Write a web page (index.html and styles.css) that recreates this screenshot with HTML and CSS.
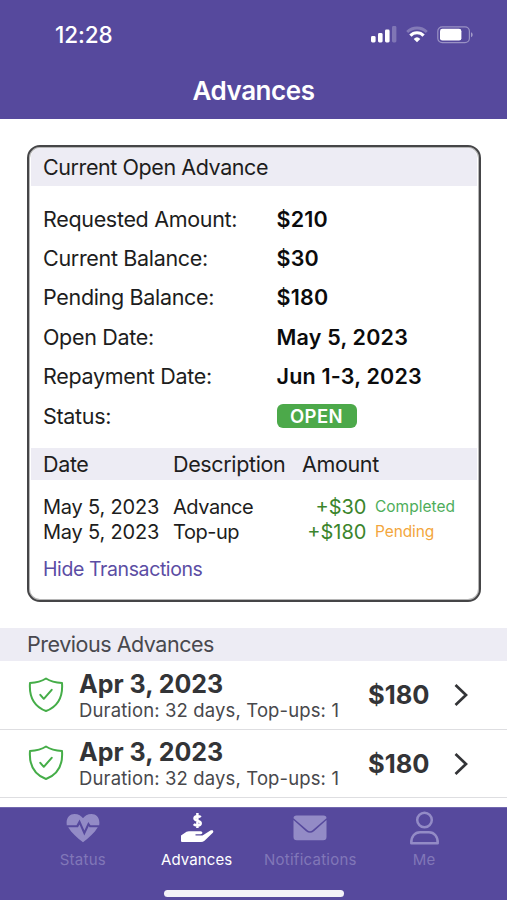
FILE: index.html
```html
<!DOCTYPE html>
<html lang="en">
<head>
<meta charset="utf-8">
<title>Advances</title>
<link rel="stylesheet" href="styles.css">
</head>
<body>
<div class="app">
  <header class="header">
    <div class="status-bar">
      <span class="clock">12:28</span>
      <svg class="signal" width="26" height="17" viewBox="0 0 26 17" fill="#fff">
        <rect x="0" y="10" width="4.6" height="6.5" rx="1.4"/>
        <rect x="7" y="7" width="4.6" height="9.5" rx="1.4"/>
        <rect x="14" y="3.5" width="4.6" height="13" rx="1.4"/>
        <rect x="21" y="0" width="4.4" height="16.5" rx="1.4" opacity=".25"/>
      </svg>
      <svg class="wifi" width="22" height="17" viewBox="0 0 22 17" fill="none" stroke="#fff">
        <path d="M1.2 6A14 14 0 0 1 20.8 6" stroke-width="2.8" opacity=".27"/>
        <path d="M4.400 9.600A9 9 0 0 1 17.600 9.600" stroke-width="3.100"/>
        <path d="M7.7 12.9A4.8 4.8 0 0 1 14.3 12.9L11 16.200Z" fill="#fff" stroke="none"/>
      </svg>
      <svg class="battery" width="37" height="18" viewBox="0 0 37 18">
        <rect x=".8" y=".8" width="31.6" height="15.8" rx="4.4" fill="none" stroke="#fff" stroke-width="1.2" opacity=".4"/>
        <rect x="3" y="2.8" width="21.4" height="11.8" rx="2.4" fill="#fff"/>
        <path d="M34 6.2c2.2.8 2.2 4.2 0 5z" fill="#fff" opacity=".45"/>
      </svg>
    </div>
    <h1 class="title">Advances</h1>
  </header>

  <main class="content">
    <section class="card">
      <h2 class="band card-title">Current Open Advance</h2>
      <dl class="details">
        <dt>Requested Amount:</dt><dd>$210</dd>
        <dt>Current Balance:</dt><dd>$30</dd>
        <dt>Pending Balance:</dt><dd>$180</dd>
        <dt>Open Date:</dt><dd>May 5, 2023</dd>
        <dt>Repayment Date:</dt><dd>Jun 1-3, 2023</dd>
        <dt>Status:</dt><dd><span class="badge">OPEN</span></dd>
      </dl>
      <div class="band table-head"><span>Date</span><span>Description</span><span>Amount</span></div>
      <div class="table-body">
        <div class="tx"><span>May 5, 2023</span><span class="kind">Advance</span><span class="amount">+$30</span><span class="state done">Completed</span></div>
        <div class="tx"><span>May 5, 2023</span><span class="kind">Top-up</span><span class="amount">+$180</span><span class="state pending">Pending</span></div>
      </div>
      <a class="toggle">Hide Transactions</a>
    </section>

    <h2 class="section-head">Previous Advances</h2>
    <ul class="history">
      <li class="item">
        <svg class="shield" width="36" height="36" viewBox="0 0 36 36" fill="none" stroke="#45ad48" stroke-width="2" stroke-linejoin="round" stroke-linecap="round"><path d="M18 1.5C22.5 4.5 28.5 5.7 34 5.9C35 19 30 29.5 18 34C6 29.5 1 19 2 5.9C7.500 5.700 13.500 4.500 18 1.500Z"/><path d="M12.300 17.800L15.800 21.800L23.700 12.800"/></svg>
        <div class="info"><strong>Apr 3, 2023</strong><span>Duration: 32 days, Top-ups: 1</span></div>
        <b class="price">$180</b>
        <svg class="chevron" width="14" height="24" viewBox="0 0 14 24" fill="none" stroke="#333437" stroke-width="2.700"><path d="M1.500 2L12 12L1.500 22"/></svg>
      </li>
      <li class="item">
        <svg class="shield" width="36" height="36" viewBox="0 0 36 36" fill="none" stroke="#45ad48" stroke-width="2" stroke-linejoin="round" stroke-linecap="round"><path d="M18 1.5C22.5 4.5 28.5 5.7 34 5.9C35 19 30 29.5 18 34C6 29.5 1 19 2 5.9C7.500 5.700 13.500 4.500 18 1.500Z"/><path d="M12.300 17.800L15.800 21.800L23.700 12.800"/></svg>
        <div class="info"><strong>Apr 3, 2023</strong><span>Duration: 32 days, Top-ups: 1</span></div>
        <b class="price">$180</b>
        <svg class="chevron" width="14" height="24" viewBox="0 0 14 24" fill="none" stroke="#333437" stroke-width="2.700"><path d="M1.500 2L12 12L1.500 22"/></svg>
      </li>
    </ul>
  </main>

  <nav class="tabs">
    <div class="tab-row">
      <a class="tab">
        <svg width="34" height="34" viewBox="0 0 34 34" fill="#938bc6"><path d="M.8 14.200C-.3 7 3.500 3 8.500 3C12.500 3 15.500 5 17 7.300C18.500 5 21.500 3 25.500 3C30.500 3 34.300 7 33.200 14.200H24.500L22.300 11L18.400 19.500L13.600 8.500L10.500 14.200Z"/><path d="M2.200 16.200H12L13.500 13.500L18.300 24.500L22.800 15L23.500 16.200H31.800C28.500 22 22.500 27 17 31.300C11.500 27 5.500 22 2.200 16.200Z"/></svg>
        <span>Status</span>
      </a>
      <a class="tab active">
        <svg width="34" height="34" viewBox="0 0 34 34" fill="#fff"><path d="M20.800 6.200C19.500 5 14.500 4.600 14.500 7.400C14.500 10.300 20.700 8.900 20.700 12.200C20.700 15.100 15.200 14.800 13.700 13.200M17.400 2V17" fill="none" stroke="#fff" stroke-width="2.500"/><path d="M1 24.500L6.500 20.800Q7.500 20.200 9 20.200H20.500C23 20.200 23 23.200 20.500 23.200H15.500V24.400H22.500L30 19.700C32.800 18.200 34.500 20.200 32.300 22.300L24.500 29.700Q22.800 31 21 31H2Q1 31 1 30Z"/></svg>
        <span>Advances</span>
      </a>
      <a class="tab">
        <svg width="34" height="34" viewBox="0 0 34 34" fill="#938bc6"><path d="M3.500 4.500H30.500Q33.500 4.500 33.500 7.300L19.500 19.200Q17 21.300 14.500 19.200L.5 7.300Q.5 4.500 3.500 4.500Z"/><path d="M.5 9L13 20.200Q17 23.200 21 20.200L33.500 9V26Q33.500 29.300 30.200 29.300H3.800Q.5 29.300 .5 26Z"/></svg>
        <span>Notifications</span>
      </a>
      <a class="tab">
        <svg width="34" height="34" viewBox="0 0 34 34" fill="none" stroke="#938bc6" stroke-width="2.500"><circle cx="17.500" cy="9" r="7.300"/><path d="M4.300 32.300C3.800 25.500 8 21.300 13 21.300H22C27 21.300 31.200 25.500 30.700 32.300Z" stroke-linejoin="round"/></svg>
        <span>Me</span>
      </a>
    </div>
    <div class="home-indicator"></div>
  </nav>
</div>
</body>
</html>
```

FILE: styles.css
```css
* { box-sizing: border-box; margin: 0; padding: 0; }
body { width: 507px; height: 900px; overflow: hidden; background: #fff; font-family: Inter, "Liberation Sans", sans-serif; font-size: 21.5px; color: #1d1d20; }
svg { display: block; flex: none; }
.app { display: flex; flex-direction: column; height: 900px; }

.header { height: 119px; background: #56499d; color: #fff; }
.status-bar { display: flex; align-items: flex-start; height: 70px; padding: 26px 33px 0 55px; }
.clock { flex: 1; margin-top: -4px; font-size: 22.5px; line-height: 26px; font-weight: 500; letter-spacing: -.1px; }
.signal { margin-top: 0; }
.wifi { margin-left: 9px; }
.battery { margin-left: 9px; }
.title { font-size: 26px; line-height: 41px; font-weight: 600; text-align: center; letter-spacing: -.45px; }

.content { flex: 1; }
.card { height: 457px; margin: 26px 26px 26px 27px; border: 2px solid #454547; border-radius: 13px; padding: 1px 2px; box-shadow: inset 0 0 0 1px rgba(69, 69, 71, .4); }
.band { background: #edecf4; font-size: 21.5px; font-weight: 400; color: #1d1d20; letter-spacing: -.35px; }
.card-title { height: 38px; padding-left: 12px; line-height: 38px; border-radius: 9px 9px 0 0; letter-spacing: -.42px; }
.details { display: grid; grid-template-columns: 233.5px 1fr; grid-auto-rows: 39.4px; align-items: center; padding: 13px 0 0 12px; height: 262px; }
.details dt { letter-spacing: -.32px; }
.details dd { font-weight: 600; color: #0b0b0c; letter-spacing: .2px; }
.badge { display: flex; align-items: center; justify-content: center; width: 80px; height: 24px; border-radius: 6px; background: #4ca94a; color: #fff; font-size: 18.5px; letter-spacing: .4px; }
.table-head, .tx { display: grid; grid-template-columns: 130px 129px 64.5px 1fr; align-items: center; padding-left: 12px; }
.table-head { height: 32px; }
.table-head span { line-height: 32px; }
.table-body { margin-top: 14px; }
.tx { height: 25px; font-size: 20px; letter-spacing: -.2px; }
.tx span { white-space: nowrap; }
.tx .kind { letter-spacing: -.45px; }
.tx .amount { justify-self: end; color: #3b852c; letter-spacing: 0; }
.tx .state { padding-left: 8.5px; font-size: 15.5px; letter-spacing: 0; }
.tx .done { color: #4ead5a; }
.tx .pending { color: #f3a63c; letter-spacing: -.1px; }
.toggle { display: block; margin: 12px 0 0 12px; line-height: 26px; font-size: 19.5px; letter-spacing: -.4px; color: #5b4da4; }

.section-head { height: 33px; padding-left: 27px; background: #edecf4; color: #48484e; font-size: 21.5px; line-height: 33px; font-weight: 400; letter-spacing: -.47px; }
.history { list-style: none; }
.item { display: flex; align-items: center; height: 68.500px; padding: 0 39px 0 28px; border-bottom: 1.500px solid #dedee1; }
.info { display: flex; flex-direction: column; width: 289px; margin-left: 15px; padding-top: 3px; color: #333437; white-space: nowrap; }
.info strong { font-size: 25px; line-height: 28px; font-weight: 700; }
.info span { font-size: 18.500px; line-height: 25px; color: #48484c; letter-spacing: .13px; }
.price { flex: 1; font-size: 25.5px; font-weight: 700; color: #333437; }
.chevron { margin-top: 1px; }

.tabs { height: 93px; background: #56499d; border-top: 1px solid #7168ae; }
.tab-row { display: grid; grid-template-columns: repeat(4, 1fr); height: 82px; padding: 3px 26px 0; }
.tab { display: flex; flex-direction: column; align-items: center; color: #8177b8; font-size: 15px; line-height: 20px; letter-spacing: .25px; }
.tab span { margin-top: 5px; }
.tab.active { color: #fff; letter-spacing: .1px; }
.home-indicator { width: 180px; height: 7px; margin: 0 auto; border-radius: 4px; background: #f3f2f8; }
```
